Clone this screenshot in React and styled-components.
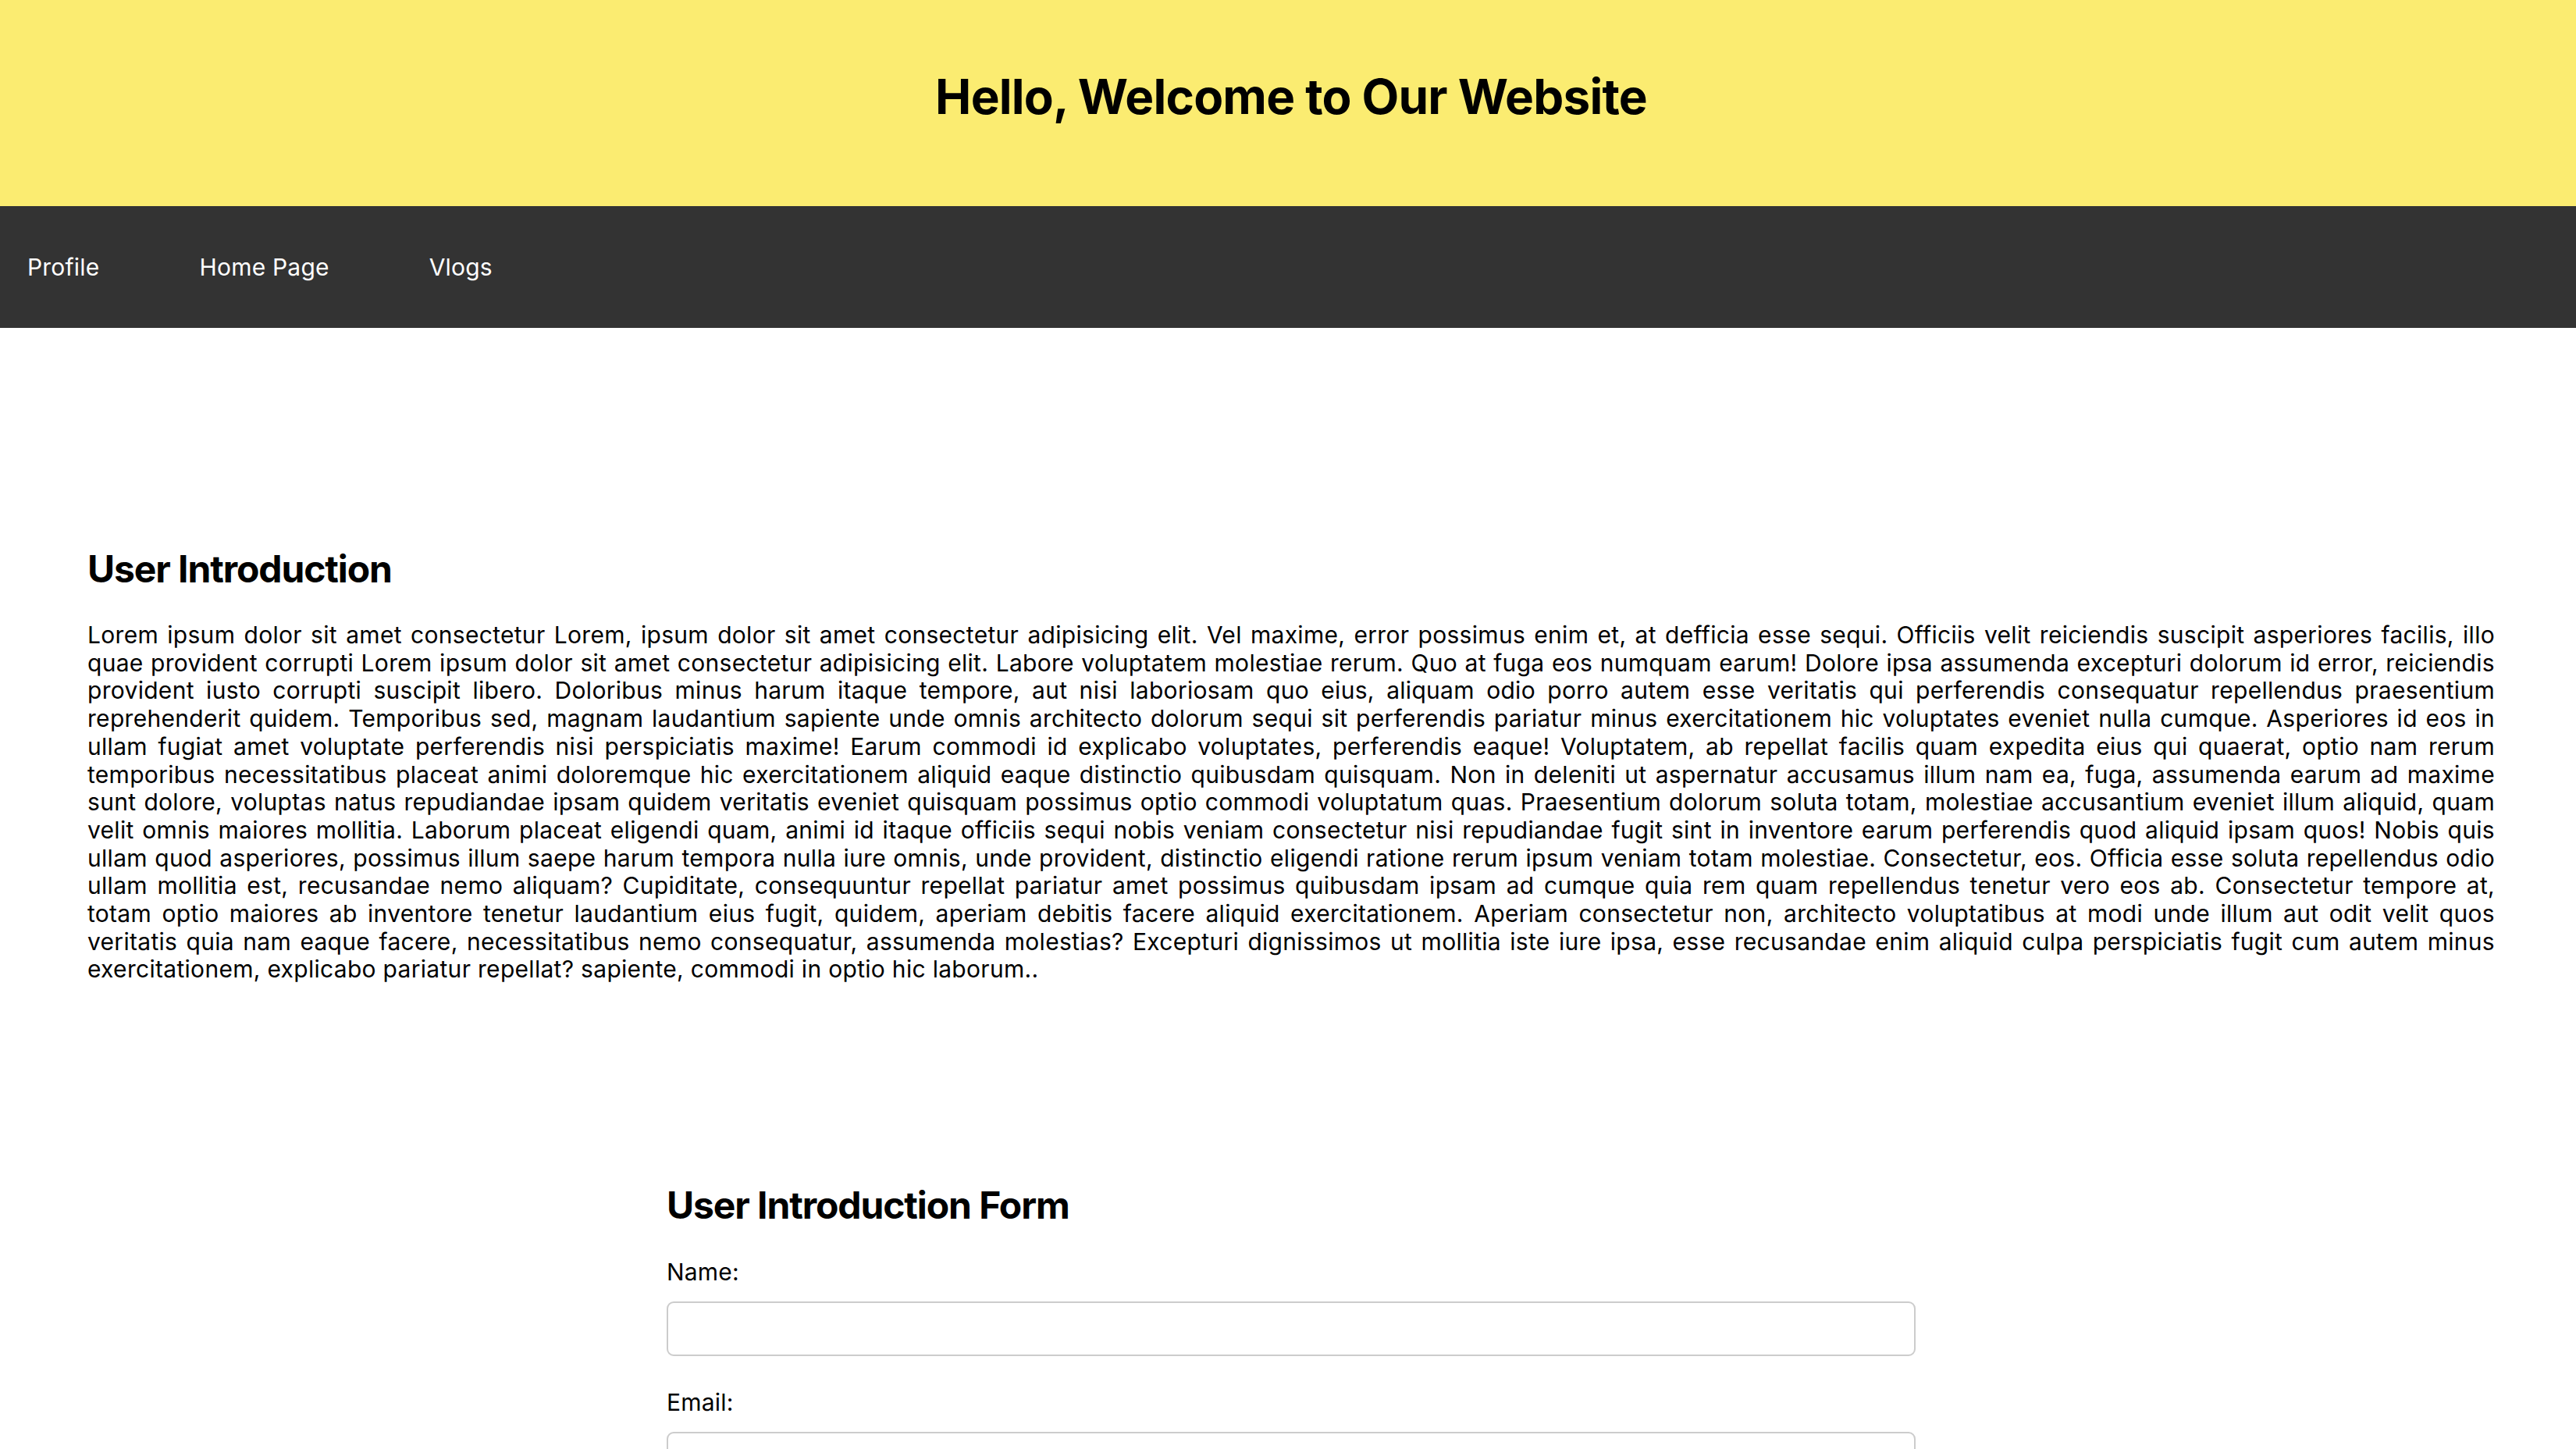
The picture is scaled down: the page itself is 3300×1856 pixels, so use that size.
import React from "react";
import styled, { createGlobalStyle } from "styled-components";

const GlobalStyle = createGlobalStyle`
  html, body {
    margin: 0;
    padding: 0;
    overflow-x: hidden;
    background: #ffffff;
  }
  body {
    font-family: Inter, "Noto Sans", "Liberation Sans", sans-serif;
    color: #000000;
  }
  * { box-sizing: border-box; }
`;

const Page = styled.div`
  width: calc(100% + 8px);
  display: flex;
  flex-direction: column;
`;

const Header = styled.header`
  background: #fbec71;
  padding: 86px 0 102px;
  display: flex;
  justify-content: center;
`;

const Title = styled.h1`
  margin: 0;
  font-size: 62px;
  font-weight: 700;
  line-height: 76px;
  letter-spacing: -0.8px;
`;

const Nav = styled.nav`
  background: #333333;
  height: 156px;
  display: flex;
  align-items: center;
  padding-left: 35px;
  gap: 128px;
`;

const NavLink = styled.a`
  color: #ffffff;
  text-decoration: none;
  font-size: 30px;
  line-height: 36px;
  letter-spacing: 0.2px;
`;

const Section = styled.section`
  padding: ${(p) => p.$top}px 112px 0;
`;

const Heading = styled.h2`
  margin: 0 0 38px;
  font-size: 48px;
  font-weight: 700;
  line-height: 58px;
  letter-spacing: -1.1px;
`;

const Paragraph = styled.p`
  margin: 0;
  font-size: 30px;
  line-height: 35.7px;
  letter-spacing: 0.3px;
`;

const Line = styled.span`
  display: block;
  text-align: ${(p) => (p.$last ? "left" : "justify")};
  text-align-last: ${(p) => (p.$last ? "left" : "justify")};
`;

const FormWrap = styled.form`
  width: 1600px;
  margin: 255px auto 0;
  display: flex;
  flex-direction: column;
`;

const Label = styled.label`
  display: block;
  font-size: 30px;
  line-height: 36px;
  letter-spacing: 0.2px;
  margin-bottom: 20px;
`;

const Input = styled.input`
  display: block;
  width: 100%;
  height: 70px;
  border: 2px solid #cccccc;
  border-radius: 9px;
  padding: 0 16px;
  font-size: 30px;
  font-family: inherit;
  margin-bottom: 41px;
  background: #ffffff;
`;

const TextArea = styled.textarea`
  display: block;
  width: 100%;
  height: 200px;
  border: 2px solid #cccccc;
  border-radius: 9px;
  padding: 16px;
  font-size: 30px;
  font-family: inherit;
  margin-bottom: 41px;
`;

const Submit = styled.button`
  align-self: flex-start;
  background: #333333;
  color: #ffffff;
  border: none;
  border-radius: 9px;
  padding: 20px 40px;
  font-size: 30px;
  font-family: inherit;
  margin-bottom: 80px;
`;

const lines = [
  "Lorem ipsum dolor sit amet consectetur Lorem, ipsum dolor sit amet consectetur adipisicing elit. Vel maxime, error possimus enim et, at defficia esse sequi. Officiis velit reiciendis suscipit asperiores facilis, illo",
  "quae provident corrupti Lorem ipsum dolor sit amet consectetur adipisicing elit. Labore voluptatem molestiae rerum. Quo at fuga eos numquam earum! Dolore ipsa assumenda excepturi dolorum id error, reiciendis",
  "provident iusto corrupti suscipit libero. Doloribus minus harum itaque tempore, aut nisi laboriosam quo eius, aliquam odio porro autem esse veritatis qui perferendis consequatur repellendus praesentium",
  "reprehenderit quidem. Temporibus sed, magnam laudantium sapiente unde omnis architecto dolorum sequi sit perferendis pariatur minus exercitationem hic voluptates eveniet nulla cumque. Asperiores id eos in",
  "ullam fugiat amet voluptate perferendis nisi perspiciatis maxime! Earum commodi id explicabo voluptates, perferendis eaque! Voluptatem, ab repellat facilis quam expedita eius qui quaerat, optio nam rerum",
  "temporibus necessitatibus placeat animi doloremque hic exercitationem aliquid eaque distinctio quibusdam quisquam. Non in deleniti ut aspernatur accusamus illum nam ea, fuga, assumenda earum ad maxime",
  "sunt dolore, voluptas natus repudiandae ipsam quidem veritatis eveniet quisquam possimus optio commodi voluptatum quas. Praesentium dolorum soluta totam, molestiae accusantium eveniet illum aliquid, quam",
  "velit omnis maiores mollitia. Laborum placeat eligendi quam, animi id itaque officiis sequi nobis veniam consectetur nisi repudiandae fugit sint in inventore earum perferendis quod aliquid ipsam quos! Nobis quis",
  "ullam quod asperiores, possimus illum saepe harum tempora nulla iure omnis, unde provident, distinctio eligendi ratione rerum ipsum veniam totam molestiae. Consectetur, eos. Officia esse soluta repellendus odio",
  "ullam mollitia est, recusandae nemo aliquam? Cupiditate, consequuntur repellat pariatur amet possimus quibusdam ipsam ad cumque quia rem quam repellendus tenetur vero eos ab. Consectetur tempore at,",
  "totam optio maiores ab inventore tenetur laudantium eius fugit, quidem, aperiam debitis facere aliquid exercitationem. Aperiam consectetur non, architecto voluptatibus at modi unde illum aut odit velit quos",
  "veritatis quia nam eaque facere, necessitatibus nemo consequatur, assumenda molestias? Excepturi dignissimos ut mollitia iste iure ipsa, esse recusandae enim aliquid culpa perspiciatis fugit cum autem minus",
  "exercitationem, explicabo pariatur repellat? sapiente, commodi in optio hic laborum..",
];

export default function App() {
  return (
    <Page>
      <GlobalStyle />
      <Header>
        <Title>Hello, Welcome to Our Website</Title>
      </Header>
      <Nav>
        <NavLink href="#">Profile</NavLink>
        <NavLink href="#">Home Page</NavLink>
        <NavLink href="#">Vlogs</NavLink>
      </Nav>
      <Section $top={280}>
        <Heading>User Introduction</Heading>
        <Paragraph>
          {lines.map((l, i) => (
            <Line key={i} $last={i === lines.length - 1}>
              {l}
            </Line>
          ))}
        </Paragraph>
      </Section>
      <FormWrap onSubmit={(e) => e.preventDefault()}>
        <Heading>User Introduction Form</Heading>
        <Label htmlFor="name">Name:</Label>
        <Input id="name" type="text" />
        <Label htmlFor="email">Email:</Label>
        <Input id="email" type="email" />
        <Label htmlFor="intro">Introduction:</Label>
        <TextArea id="intro" />
        <Submit type="submit">Submit</Submit>
      </FormWrap>
    </Page>
  );
}
